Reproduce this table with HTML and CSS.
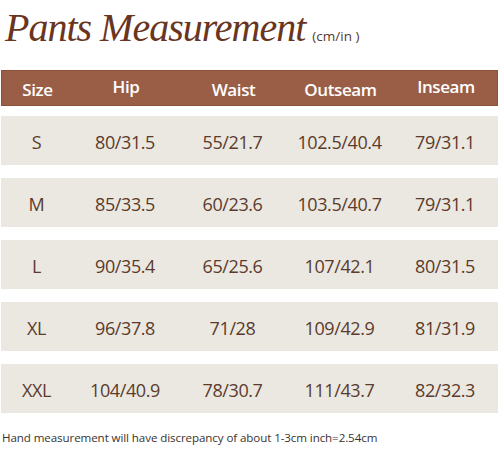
FILE: index.html
```html
<!DOCTYPE html>
<html>
<head>
<meta charset="utf-8">
<link rel="stylesheet" href="styles.css">
</head>
<body>
<div class="page">
  <div class="title-row">
    <h1 class="title">Pants Measurement</h1>
    <span class="unit">(cm/in )</span>
  </div>
  <div class="table">
    <div class="row head">
      <span>Size</span><span class="up">Hip</span><span>Waist</span><span>Outseam</span><span class="up">Inseam</span>
    </div>
    <div class="row">
      <span>S</span><span>80/31.5</span><span>55/21.7</span><span>102.5/40.4</span><span>79/31.1</span>
    </div>
    <div class="row">
      <span>M</span><span>85/33.5</span><span>60/23.6</span><span>103.5/40.7</span><span>79/31.1</span>
    </div>
    <div class="row">
      <span>L</span><span>90/35.4</span><span>65/25.6</span><span>107/42.1</span><span>80/31.5</span>
    </div>
    <div class="row">
      <span>XL</span><span>96/37.8</span><span>71/28</span><span>109/42.9</span><span>81/31.9</span>
    </div>
    <div class="row">
      <span>XXL</span><span>104/40.9</span><span>78/30.7</span><span>111/43.7</span><span>82/32.3</span>
    </div>
  </div>
  <p class="note">Hand measurement will have discrepancy of about 1-3cm inch=2.54cm</p>
</div>
</body>
</html>
```
FILE: styles.css
```css
html, body {
  margin: 0;
  padding: 0;
  background: #ffffff;
}
.page {
  width: 500px;
  height: 449px;
  font-family: "Open Sans", "Noto Sans", sans-serif;
}
.title-row {
  display: flex;
  align-items: baseline;
  padding: 3px 0 0 5px;
  height: 67px;
  box-sizing: content-box;
}
.title {
  margin: 0;
  font-family: "Liberation Serif", "DejaVu Serif", serif;
  font-style: italic;
  font-weight: normal;
  font-size: 40px;
  line-height: 50px;
  color: #6a3520;
  letter-spacing: -1px;
}
.unit {
  margin-left: 7px;
  font-size: 13.5px;
  color: #5a3a2c;
}
.table {
  display: flex;
  flex-direction: column;
  gap: 13px;
  padding: 0 2px 0 1px;
}
.row {
  display: grid;
  grid-template-columns: 71px 106px 109px 105px 106px;
  align-items: center;
  height: 49px;
  background: #ebe8e2;
  color: #5b3b2b;
  font-size: 18px;
  letter-spacing: -0.4px;
}
.row span {
  text-align: center;
  padding-top: 3px;
}
.row.head {
  height: 36px;
  background: #9a5e46;
  border: 1px solid #8c5038;
  box-sizing: border-box;
  color: #ffffff;
  font-size: 17px;
  font-weight: 600;
  margin-bottom: -3px;
}
.row.head span { padding-top: 2px; }
.row.head span.up { padding-top: 0; padding-bottom: 3px; }
.note {
  margin: 17px 0 0 2px;
  font-size: 11.6px;
  color: #3b3330;
  letter-spacing: -0.1px;
}
```
